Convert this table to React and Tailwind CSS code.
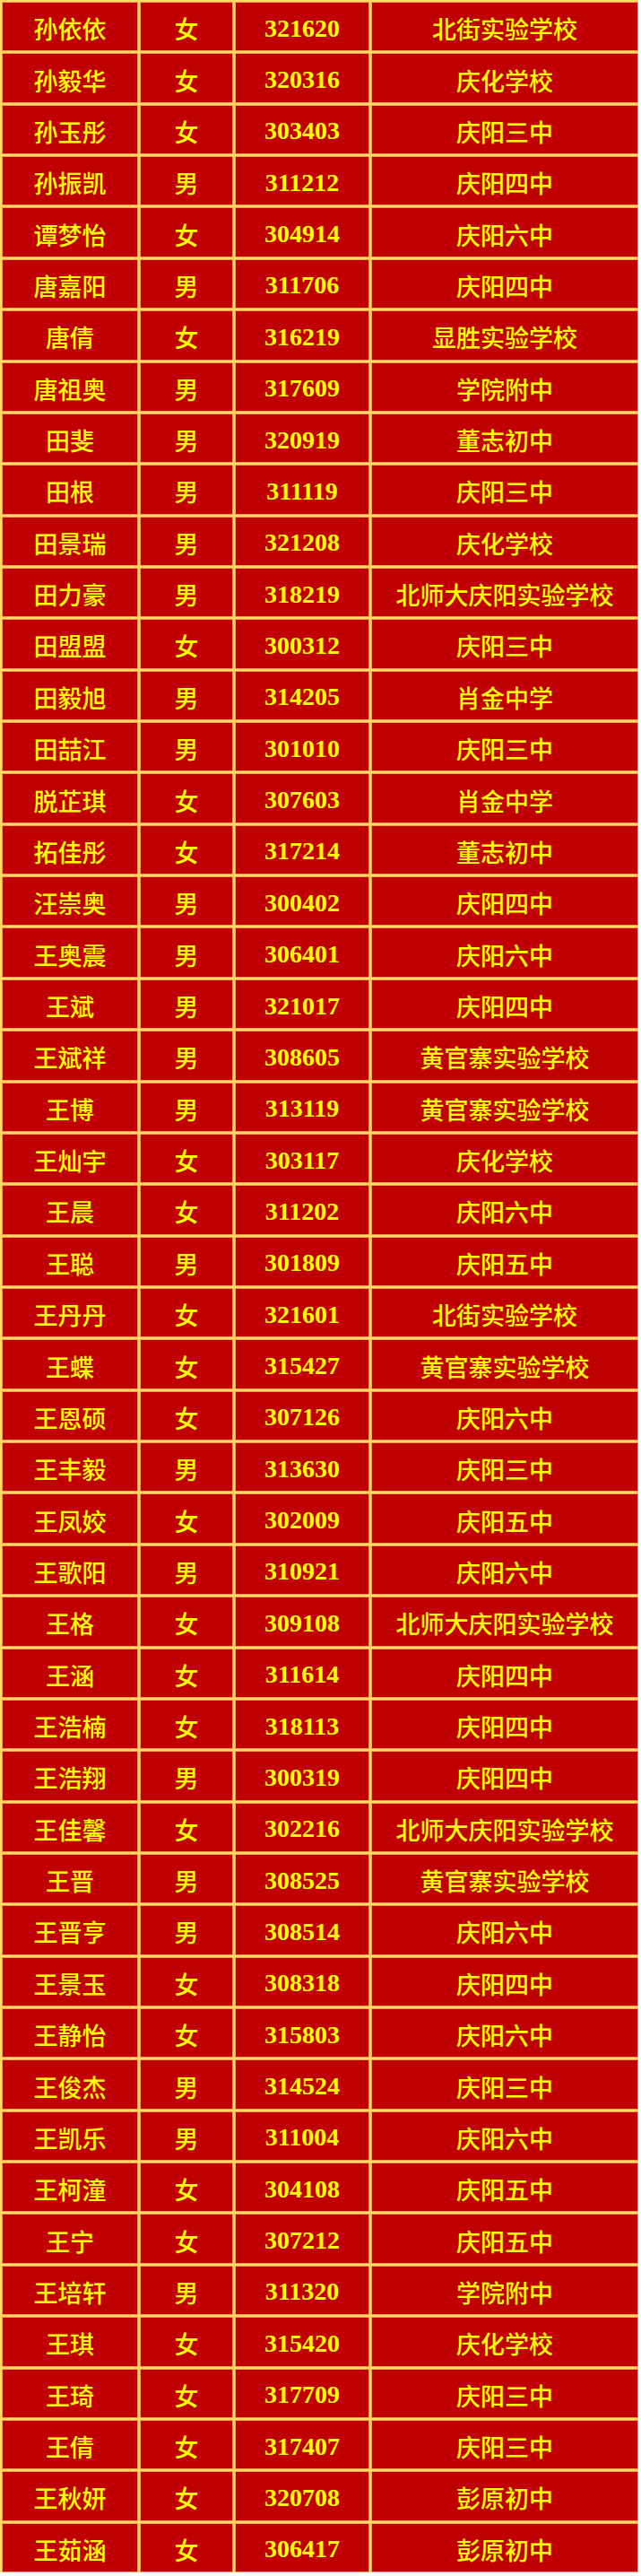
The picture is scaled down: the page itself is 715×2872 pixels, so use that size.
const rows = [
  ["孙依依", "女", "321620", "北街实验学校"],
  ["孙毅华", "女", "320316", "庆化学校"],
  ["孙玉彤", "女", "303403", "庆阳三中"],
  ["孙振凯", "男", "311212", "庆阳四中"],
  ["谭梦怡", "女", "304914", "庆阳六中"],
  ["唐嘉阳", "男", "311706", "庆阳四中"],
  ["唐倩", "女", "316219", "显胜实验学校"],
  ["唐祖奥", "男", "317609", "学院附中"],
  ["田斐", "男", "320919", "董志初中"],
  ["田根", "男", "311119", "庆阳三中"],
  ["田景瑞", "男", "321208", "庆化学校"],
  ["田力豪", "男", "318219", "北师大庆阳实验学校"],
  ["田盟盟", "女", "300312", "庆阳三中"],
  ["田毅旭", "男", "314205", "肖金中学"],
  ["田喆江", "男", "301010", "庆阳三中"],
  ["脱芷琪", "女", "307603", "肖金中学"],
  ["拓佳彤", "女", "317214", "董志初中"],
  ["汪崇奥", "男", "300402", "庆阳四中"],
  ["王奥震", "男", "306401", "庆阳六中"],
  ["王斌", "男", "321017", "庆阳四中"],
  ["王斌祥", "男", "308605", "黄官寨实验学校"],
  ["王博", "男", "313119", "黄官寨实验学校"],
  ["王灿宇", "女", "303117", "庆化学校"],
  ["王晨", "女", "311202", "庆阳六中"],
  ["王聪", "男", "301809", "庆阳五中"],
  ["王丹丹", "女", "321601", "北街实验学校"],
  ["王蝶", "女", "315427", "黄官寨实验学校"],
  ["王恩硕", "女", "307126", "庆阳六中"],
  ["王丰毅", "男", "313630", "庆阳三中"],
  ["王凤姣", "女", "302009", "庆阳五中"],
  ["王歌阳", "男", "310921", "庆阳六中"],
  ["王格", "女", "309108", "北师大庆阳实验学校"],
  ["王涵", "女", "311614", "庆阳四中"],
  ["王浩楠", "女", "318113", "庆阳四中"],
  ["王浩翔", "男", "300319", "庆阳四中"],
  ["王佳馨", "女", "302216", "北师大庆阳实验学校"],
  ["王晋", "男", "308525", "黄官寨实验学校"],
  ["王晋亨", "男", "308514", "庆阳六中"],
  ["王景玉", "女", "308318", "庆阳四中"],
  ["王静怡", "女", "315803", "庆阳六中"],
  ["王俊杰", "男", "314524", "庆阳三中"],
  ["王凯乐", "男", "311004", "庆阳六中"],
  ["王柯潼", "女", "304108", "庆阳五中"],
  ["王宁", "女", "307212", "庆阳五中"],
  ["王培轩", "男", "311320", "学院附中"],
  ["王琪", "女", "315420", "庆化学校"],
  ["王琦", "女", "317709", "庆阳三中"],
  ["王倩", "女", "317407", "庆阳三中"],
  ["王秋妍", "女", "320708", "彭原初中"],
  ["王茹涵", "女", "306417", "彭原初中"],
];

const cell =
  "flex items-center justify-center bg-[#c00000] border border-[#f2a24e] text-[#ffff00] pt-[4px]";
const cjk =
  "text-[27px] leading-none [font-family:'Noto_Sans_CJK_SC',sans-serif] font-medium";
const num =
  "text-[28px] leading-none [font-family:'Liberation_Serif',serif] font-bold";

export default function App() {
  return (
    <div className="w-[715px] bg-white">
      <div className="w-[712px] bg-[#ffd966] pt-[2px] pl-[2px] flex flex-col gap-[2px]">
        {rows.map((r, i) => (
          <div
            key={i}
            className="grid grid-cols-[152px_104px_150px_298px] gap-[2px] h-[55.36px]"
          >
            <div className={cell}>
              <span className={cjk}>{r[0]}</span>
            </div>
            <div className={cell}>
              <span className={cjk}>{r[1]}</span>
            </div>
            <div className={cell}>
              <span className={num}>{r[2]}</span>
            </div>
            <div className={cell}>
              <span className={cjk}>{r[3]}</span>
            </div>
          </div>
        ))}
      </div>
    </div>
  );
}
